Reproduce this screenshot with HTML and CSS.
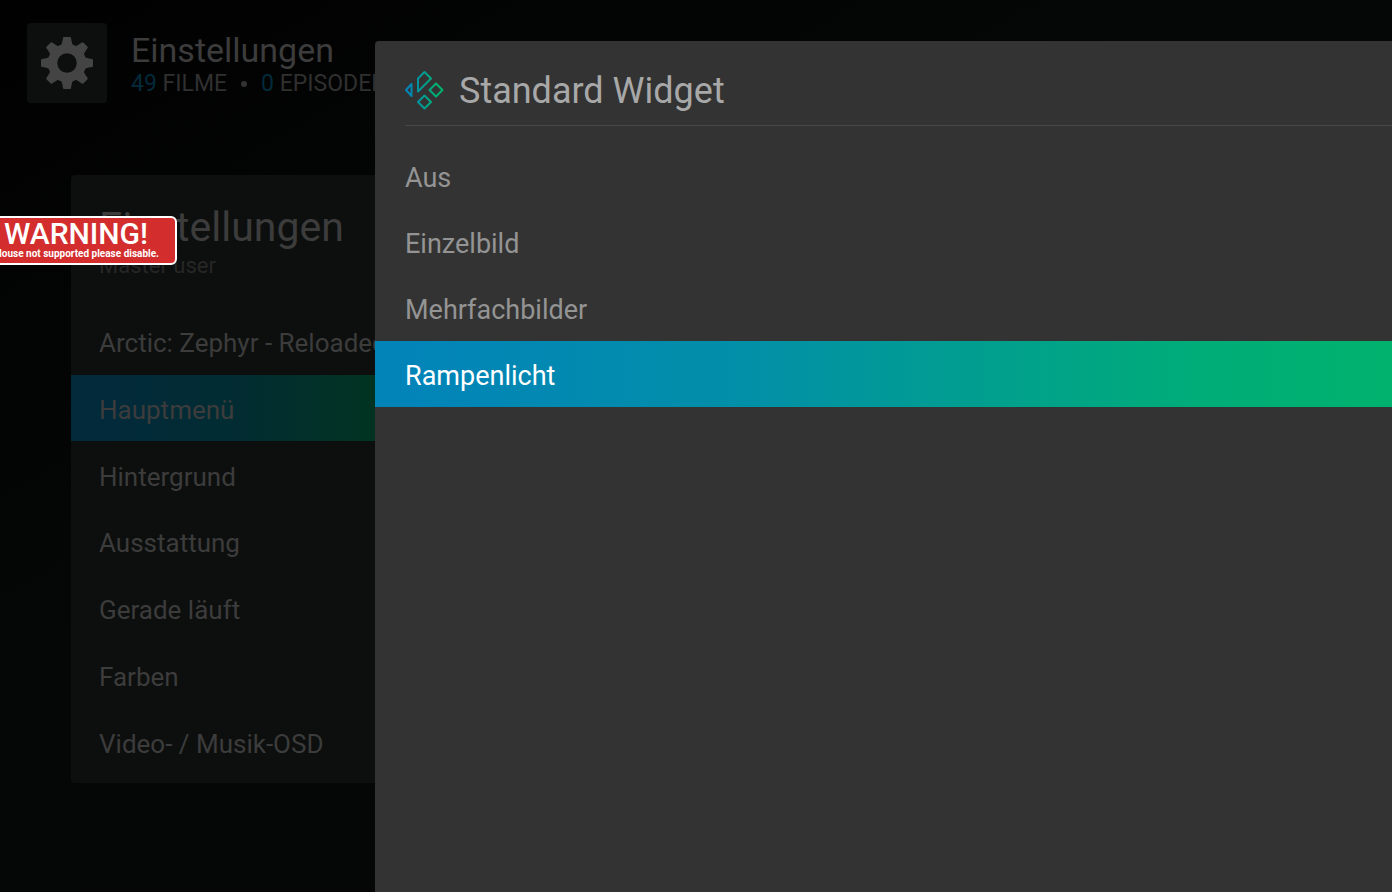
FILE: index.html
```html
<!DOCTYPE html>
<html lang="de">
<head>
    <meta charset="UTF-8">
    <meta name="viewport" content="width=device-width, initial-scale=1.0">
    <title>Einstellungen</title>
    <link rel="stylesheet" href="styles.css">
</head>
<body>
    <main class="page">
        <header class="topbar">
            <div class="topbar-icon">
                <svg width="52" height="52" viewBox="0 0 52 52" aria-hidden="true">
                    <g fill="#444">
                        <path id="teeth" d="M19 10Q21 8 22 1Q22 0 23 0H29Q30 0 30 1Q31 8 33 10ZM19 42Q21 44 22 51Q22 52 23 52H29Q30 52 30 51Q31 44 33 42Z"/>
                        <use href="#teeth" transform="rotate(45 26 26)"/>
                        <use href="#teeth" transform="rotate(90 26 26)"/>
                        <use href="#teeth" transform="rotate(135 26 26)"/>
                    </g>
                    <circle cx="26" cy="26" r="14.5" fill="none" stroke="#444" stroke-width="9.5"/>
                </svg>
            </div>
            <div>
                <h1>Einstellungen</h1>
                <p class="stats">
                    <span><b>49</b> FILME</span>
                    <span class="dot"></span>
                    <span><b>0</b> EPISODEN</span>
                </p>
            </div>
        </header>

        <section class="panel">
            <h2>Einstellungen</h2>
            <p class="user">Master user</p>
            <nav class="menu">
                <a href="#">Arctic: Zephyr - Reloaded</a>
                <a href="#" class="active">Hauptmenü</a>
                <a href="#">Hintergrund</a>
                <a href="#">Ausstattung</a>
                <a href="#">Gerade läuft</a>
                <a href="#">Farben</a>
                <a href="#">Video- / Musik-OSD</a>
            </nav>
        </section>
    </main>

    <div class="warning" role="alert">
        <strong>WARNING!</strong>
        <span>Mouse not supported please disable.</span>
    </div>

    <div class="dialog" role="dialog" aria-labelledby="dialogTitle">
        <header class="dialog-header">
            <svg width="40" height="40" viewBox="0 0 40 40" aria-hidden="true">
                <defs>
                    <linearGradient id="kodi" gradientUnits="userSpaceOnUse" x1="0" y1="0" x2="32" y2="0">
                        <stop offset="0.1" stop-color="#0284b8"/>
                        <stop offset="1" stop-color="#00b26e"/>
                    </linearGradient>
                </defs>
                <g fill="none" stroke="url(#kodi)" stroke-width="2" stroke-linejoin="round">
                    <path d="M19.5 2 26 8.500 13 21.500V8.500Z"/>
                    <path d="M31 13.500 37.500 20 31 26.500 24.500 20Z"/>
                    <path d="M19.500 25.500 26 32 19.500 38.500 13 32Z"/>
                    <path d="M6.500 14V26L1 20Z"/>
                </g>
            </svg>
            <h2 id="dialogTitle">Standard Widget</h2>
        </header>
        <div class="options">
            <button type="button">Aus</button>
            <button type="button">Einzelbild</button>
            <button type="button">Mehrfachbilder</button>
            <button type="button" class="active">Rampenlicht</button>
        </div>
    </div>
</body>
</html>
```
FILE: styles.css
```css
* {
    box-sizing: border-box;
    margin: 0;
    padding: 0;
}

body {
    background: linear-gradient(150deg, #010101, #050606 40%, #060606);
    color: #3c3c3c;
    font-family: Roboto, Arial, sans-serif;
    font-weight: 400;
    overflow: hidden;
}

h1, h2 {
    font-weight: 400;
}

.page {
    display: flex;
    flex-direction: column;
    min-height: 100vh;
    padding: 23px 27px 109px;
}

.topbar {
    display: flex;
    gap: 24px;
    height: 80px;
    margin-bottom: 72px;
}

.topbar-icon {
    display: flex;
    align-items: center;
    justify-content: center;
    width: 80px;
    height: 80px;
    background-color: #0d0f0e;
    border-radius: 4px;
}

.topbar h1 {
    padding-top: 6px;
    font-size: 34px;
    line-height: 42px;
}

.stats {
    display: flex;
    align-items: center;
    gap: 14px;
    font-size: 23px;
    line-height: 26px;
    color: #303030;
}

.stats b {
    font-weight: 400;
    color: #022a3a;
}

.dot {
    width: 6px;
    height: 6px;
    background-color: #333;
    border-radius: 50%;
}

.panel {
    display: flex;
    flex-direction: column;
    flex: 1;
    width: 420px;
    margin-left: 44px;
    padding: 27px 0 8px;
    background-color: #0d0f0e;
    border-radius: 4px;
}

.panel h2 {
    padding-left: 28px;
    font-size: 41px;
    line-height: 50px;
}

.user {
    padding-left: 28px;
    margin-bottom: 28px;
    font-size: 22px;
    line-height: 28px;
    color: #262626;
}

.menu {
    display: flex;
    flex-direction: column;
    justify-content: space-between;
    flex: 1;
}

.menu a {
    height: 66px;
    padding-left: 28px;
    font-size: 26px;
    line-height: 70px;
    color: #3c3c3c;
    text-decoration: none;
}

.menu .active {
    background: linear-gradient(90deg, #022a3a 10%, #022c32 40%, #013322 70%);
}

.warning {
    position: absolute;
    top: 216px;
    left: -25px;
    display: flex;
    flex-direction: column;
    align-items: center;
    width: 202px;
    height: 49px;
    background-color: #d32d2e;
    border: 2px solid #fff;
    border-radius: 6px;
    color: #fff;
}

.warning strong {
    font-size: 30px;
    font-weight: 500;
    line-height: 32px;
}

.warning span {
    font-size: 10px;
    font-weight: 700;
    line-height: 8px;
    white-space: nowrap;
}

.dialog {
    position: absolute;
    top: 41px;
    right: 0;
    bottom: 0;
    left: 375px;
    background-color: #333;
    border-top-left-radius: 4px;
}

.dialog-header {
    display: flex;
    align-items: center;
    gap: 14px;
    height: 85px;
    margin-left: 30px;
    padding-top: 14px;
    border-bottom: 1px solid #484848;
}

.dialog-header h2 {
    padding-top: 2px;
    font-size: 36px;
    line-height: 44px;
    color: #a8a8a8;
}

.options {
    display: flex;
    flex-direction: column;
    padding-top: 17px;
}

.options button {
    height: 66px;
    padding: 4px 30px 0;
    background: none;
    border: none;
    color: #949494;
    font-family: inherit;
    font-size: 27px;
    text-align: left;
}

.options .active {
    background: linear-gradient(90deg, #0284b8 4%, #028fa8 36%, #00ad77 82%, #00b26e);
    color: #fff;
}
```
